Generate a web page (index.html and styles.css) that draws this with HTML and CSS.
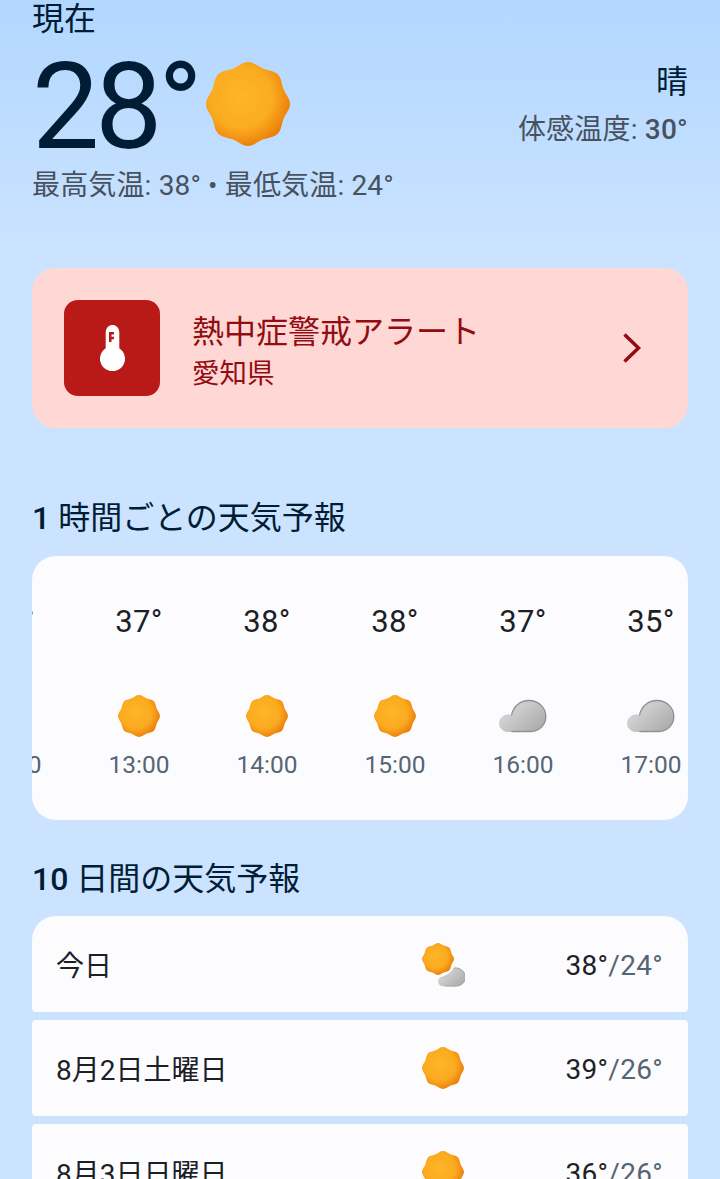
FILE: index.html
```html
<!DOCTYPE html>
<html lang="ja">
<head>
<meta charset="utf-8">
<title>天気</title>
<link rel="stylesheet" href="styles.css">
</head>
<body>
<main class="page">
  <section class="now">
    <div class="now-label">現在</div>
    <div class="now-main">
      <div class="now-left">
        <span class="now-temp">28°</span>
        <svg class="sun-big" viewBox="-42 -42 84 84">
          <defs>
            <radialGradient id="sunGrad" cx="42%" cy="42%" r="62%">
              <stop offset="0" stop-color="#feb527"/>
              <stop offset="0.6" stop-color="#fbab20"/>
              <stop offset="0.85" stop-color="#f08d10"/>
              <stop offset="1" stop-color="#e67a04"/>
            </radialGradient>
            <linearGradient id="cloudGrad" x1="0" y1="0.2" x2="1" y2="0.9">
              <stop offset="0" stop-color="#dcdcdc"/>
              <stop offset="1" stop-color="#a9a9a9"/>
            </linearGradient>
            <symbol id="sun" viewBox="-42 -42 84 84">
              <path fill="url(#sunGrad)" d="M0-42C5.500-42 9.600-37.700 14.700-35.600C19.800-33.500 25.800-33.600 29.700-29.700C33.600-25.800 33.500-19.800 35.600-14.700C37.700-9.600 42-5.500 42 0C42 5.500 37.700 9.600 35.600 14.700C33.500 19.800 33.600 25.800 29.700 29.700C25.800 33.600 19.800 33.500 14.700 35.600C9.600 37.700 5.500 42 0 42C-5.500 42-9.600 37.700-14.700 35.600C-19.800 33.500-25.800 33.600-29.700 29.700C-33.600 25.800-33.500 19.800-35.600 14.700C-37.700 9.600-42 5.500-42 0C-42-5.500-37.700-9.600-35.600-14.700C-33.500-19.800-33.600-25.800-29.700-29.700C-25.800-33.600-19.800-33.500-14.700-35.600C-9.600-37.700-5.500-42 0-42Z"/>
            </symbol>
            <symbol id="cloud" viewBox="0 0 48 34">
              <path fill="url(#cloudGrad)" stroke="#c4c6c8" stroke-width="1" d="M9 32.500C4 32.500 .7 29 .7 24.500C.7 19.500 4.500 16 9.500 16C10.500 16 11.500 16.200 12.500 16.500C14 8 21 1.500 30 1.500C39.500 1.500 46.800 8.500 46.800 17.500C46.800 26 40 32.500 31 32.500Z"/>
              <path fill="none" stroke="#8f9294" stroke-width="1.300" d="M12.500 32.500H31C40 32.500 46.800 26 46.800 17.500C46.800 8.500 39.500 1.500 30 1.500C21 1.500 14 8 12.500 16.500"/>
            </symbol>
          </defs>
          <use href="#sun" x="-42" y="-42" width="84" height="84"/>
        </svg>
      </div>
      <div class="now-right">
        <div class="cond">晴</div>
        <div class="feels">体感温度: <span class="feels-val">30°</span></div>
      </div>
    </div>
    <div class="hilo">最高気温: 38° • 最低気温: 24°</div>
  </section>

  <section class="alert">
    <div class="alert-icon">
      <svg class="thermo" viewBox="0 0 25 46">
        <path fill="#fff" d="M5.700 6.700a6.800 6.800 0 0 1 13.600 0v16.500a12.500 12.500 0 1 1-13.600 0Z"/>
        <path fill="#b71a17" d="M9 7h5v2.500h-2.500v2.300h2.500v2.500h-2.500v2.700h-2.500Z"/>
      </svg>
    </div>
    <div class="alert-text">
      <div class="alert-title">熱中症警戒アラート</div>
      <div class="alert-sub">愛知県</div>
    </div>
    <svg class="chev" viewBox="0 0 20 32"><path d="M2.500 2.500L16.500 16L2.500 29.500"/></svg>
  </section>

  <h2 class="heading heading-hourly"><span class="num">1</span> 時間ごとの天気予報</h2>
  <section class="hourly">
    <div class="hour hour-first">
      <div class="h-temp">37°</div>
      <svg class="h-icon"><use href="#sun" x="0" y="0" width="42" height="42"/></svg>
      <div class="h-time">12:00</div>
    </div>
    <div class="hour">
      <div class="h-temp">37°</div>
      <svg class="h-icon"><use href="#sun" x="0" y="0" width="42" height="42"/></svg>
      <div class="h-time">13:00</div>
    </div>
    <div class="hour">
      <div class="h-temp">38°</div>
      <svg class="h-icon"><use href="#sun" x="0" y="0" width="42" height="42"/></svg>
      <div class="h-time">14:00</div>
    </div>
    <div class="hour">
      <div class="h-temp">38°</div>
      <svg class="h-icon"><use href="#sun" x="0" y="0" width="42" height="42"/></svg>
      <div class="h-time">15:00</div>
    </div>
    <div class="hour">
      <div class="h-temp">37°</div>
      <svg class="h-icon h-cloud"><use href="#cloud" x="0" y="0" width="48" height="34"/></svg>
      <div class="h-time">16:00</div>
    </div>
    <div class="hour">
      <div class="h-temp">35°</div>
      <svg class="h-icon h-cloud"><use href="#cloud" x="0" y="0" width="48" height="34"/></svg>
      <div class="h-time">17:00</div>
    </div>
  </section>

  <h2 class="heading heading-daily"><span class="num">10</span> 日間の天気予報</h2>
  <section class="daily">
    <div class="day">
      <div class="d-name">今日</div>
      <svg class="d-icon" viewBox="0 0 44 46">
        <use href="#cloud" x="17" y="26" width="28" height="20"/>
        <circle cx="17" cy="18" r="18" fill="#fcfcff"/>
        <use href="#sun" x="1" y="2" width="32" height="32"/>
      </svg>
      <div class="d-temp"><span class="d-hi">38°</span>/24°</div>
    </div>
    <div class="day">
      <div class="d-name">8月2日土曜日</div>
      <svg class="d-icon" viewBox="0 0 44 46"><use href="#sun" x="1" y="2" width="42" height="42"/></svg>
      <div class="d-temp"><span class="d-hi">39°</span>/26°</div>
    </div>
    <div class="day">
      <div class="d-name">8月3日日曜日</div>
      <svg class="d-icon" viewBox="0 0 44 46"><use href="#sun" x="1" y="2" width="42" height="42"/></svg>
      <div class="d-temp"><span class="d-hi">36°</span>/26°</div>
    </div>
  </section>
</main>
</body>
</html>
```

FILE: styles.css
```css
* { box-sizing: border-box; }
html, body { margin: 0; padding: 0; }
body {
  width: 720px;
  height: 1179px;
  overflow: hidden;
  background: linear-gradient(180deg, #b2d7ff 0px, #cbe3ff 260px, #cbe3ff 1179px);
  font-family: Roboto, "Noto Sans CJK JP", sans-serif;
  color: #001d35;
}
.page { padding: 0 32px; }

.now-label { font-size: 32px; line-height: 38px; height: 38px; }
.now-main { display: flex; justify-content: space-between; align-items: flex-start; margin-top: 6px; height: 118px; }
.now-left { display: flex; align-items: flex-start; }
.now-temp {
  font-size: 120px;
  line-height: 126px;
  letter-spacing: -4.500px;
  height: 118px;
  width: 174px;
  white-space: nowrap;
}
.sun-big { width: 84px; height: 84px; margin-top: 18px; }
.now-right { text-align: right; }
.cond { font-size: 32px; line-height: 40px; margin-top: 18px; }
.feels { font-size: 28px; line-height: 40px; margin-top: 8px; color: #47525e; letter-spacing: .2px; }
.feels-val { font-weight: 500; }
.hilo { font-size: 28px; line-height: 40px; height: 41px; margin-top: 4px; color: #47525e; letter-spacing: .15px; }

.alert {
  display: flex;
  align-items: center;
  height: 160px;
  margin-top: 61px;
  padding: 0 46px 0 32px;
  border-radius: 24px;
  background: #ffd8d6;
  color: #930c12;
}
.alert-icon {
  width: 96px;
  height: 96px;
  border-radius: 14px;
  background: #b71a17;
  display: flex;
  align-items: center;
  justify-content: center;
  flex: none;
}
.thermo { width: 25px; height: 46px; }
.alert-text { flex: 1; margin-left: 32px; padding-top: 8px; }
.alert-title { font-size: 32px; line-height: 44px; }
.alert-sub { font-size: 27.500px; line-height: 40px; }
.chev { width: 20px; height: 32px; flex: none; }
.chev path { fill: none; stroke: #930c12; stroke-width: 3.500; }

.heading { font-size: 32px; font-weight: 400; line-height: 44px; margin: 0; color: #001d35; }
.num { font-weight: 500; }
.heading-hourly { margin-top: 68px; }
.heading-daily { margin-top: 37px; }

.hourly {
  display: flex;
  height: 264px;
  margin-top: 16px;
  border-radius: 24px;
  background: #fcfcff;
  overflow: hidden;
}
.hour {
  flex: 0 0 128px;
  display: flex;
  flex-direction: column;
  align-items: center;
}
.hour-first { margin-left: -85px; }
.h-temp { font-size: 31px; line-height: 40px; margin-top: 46px; color: #1c2126; letter-spacing: .4px; font-weight: 450; }
.h-icon { width: 42px; height: 42px; margin-top: 53px; }
.h-cloud { width: 48px; height: 34px; margin-top: 57px; margin-bottom: 4px; }
.h-time { font-size: 24.500px; line-height: 32px; margin-top: 12px; color: #566573; font-weight: 450; }

.daily { display: flex; flex-direction: column; gap: 8px; margin-top: 15px; }
.day {
  display: flex;
  align-items: center;
  flex: none;
  height: 96px;
  padding: 0 25px 0 24px;
  background: #fcfcff;
  border-radius: 4px;
}
.day:first-child { border-radius: 24px 24px 4px 4px; }
.d-name { width: 365px; font-size: 28px; line-height: 36px; padding-top: 5px; color: #1c2126; }
.d-icon { width: 44px; height: 46px; flex: none; }
.d-temp { margin-left: auto; font-size: 28px; line-height: 36px; padding-top: 4px; color: #566573; letter-spacing: .3px; font-weight: 450; }
.d-hi { color: #1c2126; }
```
